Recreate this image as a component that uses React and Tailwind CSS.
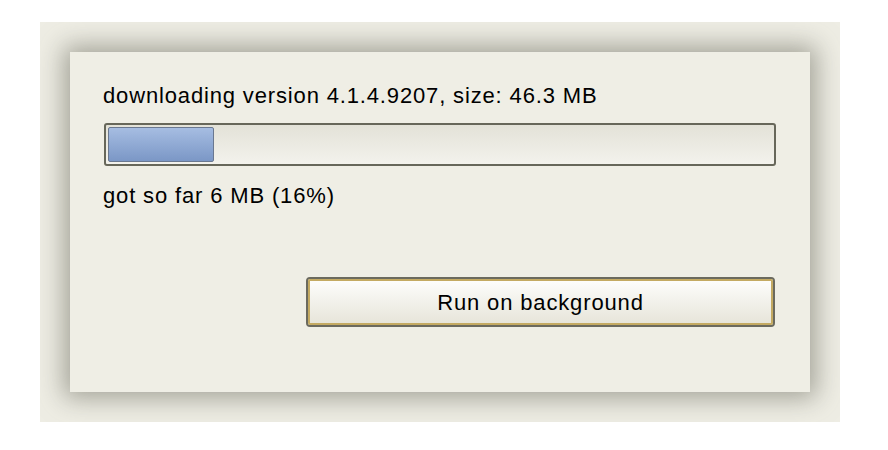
import React from 'react';

function App() {
  const total = 46.3;
  const got = 6;
  const pct = 16;

  return (
    <div className="w-[888px] h-[450px] bg-white pt-[22px] pl-[40px] font-['Liberation_Sans',Arial,sans-serif] text-black">
      <div className="w-[800px] h-[400px] p-[30px] bg-[#eeede4] overflow-hidden">
        {/* dialog body */}
        <div className="w-[740px] h-[340px] bg-[#efeee5] shadow-[0_0_24px_6px_rgba(100,100,88,0.55)] px-[33px] pt-[31px] flex flex-col">
          <div className="text-[22px] leading-[25px] tracking-[0.85px]">
            downloading version 4.1.4.9207, size: {total} MB
          </div>
          <div className="mt-[15px] ml-px w-[672px] h-[43px] rounded-[3px] border-2 border-[#67675a] bg-gradient-to-b from-[#e3e2d8] to-[#f3f2ec] p-[2px]">
            <div
              className="h-full rounded-[2px] border border-[#6a7890] bg-gradient-to-b from-[#a6bde2] to-[#7b97c6]"
              style={{ width: `${pct}%` }}
            />
          </div>
          <div className="mt-[17px] text-[22px] leading-[25px] tracking-[0.85px]">
            got so far {got} MB ({pct}%)
          </div>
          <div className="flex justify-end pr-[2px] mt-[69px]">
            <button className="w-[469px] h-[50px] rounded-[4px] border-2 border-[#6b6a5e] p-0">
              <span className="flex items-center justify-center w-full h-full rounded-[2px] border-2 border-[#c4aa62] bg-gradient-to-b from-[#fdfdfb] to-[#e7e5da] text-[22px] tracking-[0.85px]">
                Run on background
              </span>
            </button>
          </div>
        </div>
      </div>
    </div>
  );
}

export default App;
